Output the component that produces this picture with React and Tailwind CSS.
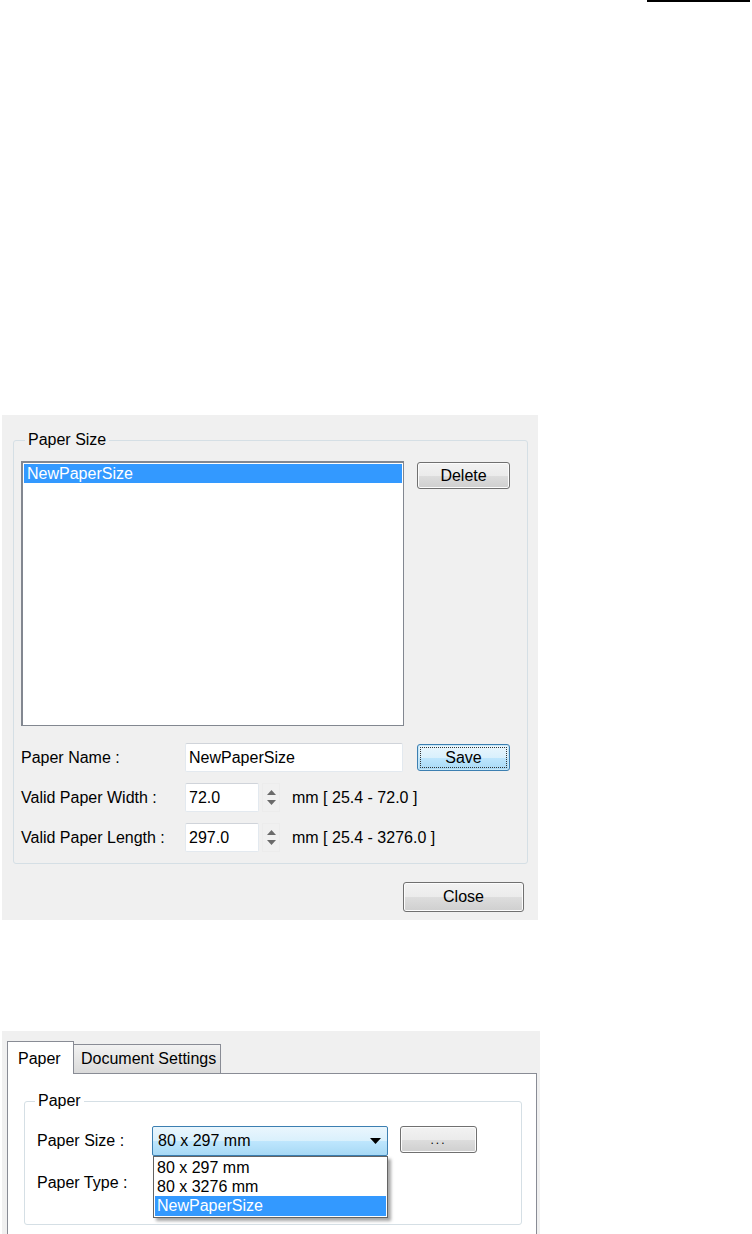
import React from "react";

const font = { fontFamily: '"Liberation Sans", Arial, sans-serif' };

function Btn({ children, className = "", focused = false }) {
  if (focused) {
    return (
      <div
        className={`flex items-center justify-center rounded-[3px] border border-[#3c7fb1] bg-[linear-gradient(to_bottom,#eaf6fd_0%,#d9f0fc_50%,#bee6fd_51%,#a7d9f5_100%)] p-[2px] shadow-[inset_0_0_0_1px_#c6e6f7] ${className}`}
      >
        <div className="flex h-full w-full items-center justify-center border border-dotted border-[#333]">
          {children}
        </div>
      </div>
    );
  }
  return (
    <div
      className={`flex items-center justify-center rounded-[3px] border border-[#707070] bg-[linear-gradient(to_bottom,#f2f2f2_0%,#ebebeb_50%,#dddddd_51%,#cfcfcf_100%)] shadow-[inset_0_0_0_1px_#fcfcfc] ${className}`}
    >
      {children}
    </div>
  );
}

function Spinner() {
  return (
    <div className="ml-[3px] flex h-[29px] w-[18px] flex-col items-center justify-center gap-[5px] border border-[#ececec] bg-[#f0f0f0]">
      <svg width="9" height="5" viewBox="0 0 9 5">
        <path d="M0 5 L4.5 0 L9 5 Z" fill="#6a6a6a" />
      </svg>
      <svg width="9" height="5" viewBox="0 0 9 5">
        <path d="M0 0 L4.5 5 L9 0 Z" fill="#6a6a6a" />
      </svg>
    </div>
  );
}

function Input({ value, className = "" }) {
  return (
    <div
      className={`flex h-[29px] items-center rounded-[2px] border border-[#e3e9ef] border-t-[#d0d4da] bg-white pl-[3px] ${className}`}
    >
      {value}
    </div>
  );
}

export default function App() {
  return (
    <div className="min-h-[1234px] bg-white text-[16px] text-black" style={font}>
      <div className="flex justify-end">
        <div className="mr-[2px] h-[2px] w-[103px] bg-black" />
      </div>

      {/* Paper size dialog */}
      <div className="ml-[2px] mt-[413px] h-[505px] w-[536px] bg-[#f0f0f0] pl-[11px] pt-[25px]">
        <div className="relative h-[424px] w-[515px] rounded-[3px] border border-[#d5dfe5] pl-[7px] pt-[20px]">
          <div className="absolute left-[11px] top-[-11px] bg-[#f0f0f0] px-[3px] leading-[20px]">
            Paper Size
          </div>
          <div className="flex items-start">
            <div className="h-[265px] w-[383px] border border-[#828790] border-l-[2px] border-t-[2px] bg-white p-[1px]">
              <div className="flex h-[19px] items-center bg-[#3399ff] pl-[3px] text-white">
                NewPaperSize
              </div>
            </div>
            <Btn className="ml-[13px] mt-[1px] h-[27px] w-[93px]">Delete</Btn>
          </div>

          <div className="mt-[17px] flex items-center">
            <div className="w-[164px]">Paper Name :</div>
            <Input value="NewPaperSize" className="w-[218px]" />
            <Btn focused className="ml-[14px] h-[27px] w-[93px]">
              Save
            </Btn>
          </div>
          <div className="mt-[11px] flex items-center">
            <div className="w-[164px]">Valid Paper Width :</div>
            <Input value="72.0" className="w-[74px]" />
            <Spinner />
            <div className="ml-[12px]">mm [ 25.4 - 72.0 ]</div>
          </div>
          <div className="mt-[11px] flex items-center">
            <div className="w-[164px]">Valid Paper Length :</div>
            <Input value="297.0" className="w-[74px]" />
            <Spinner />
            <div className="ml-[12px]">mm [ 25.4 - 3276.0 ]</div>
          </div>
        </div>
        <Btn className="ml-[390px] mt-[18px] h-[30px] w-[121px]">Close</Btn>
      </div>

      {/* Tabbed panel */}
      <div className="ml-[2px] mt-[111px] h-[203px] w-[538px] overflow-hidden bg-[#f0f0f0] pl-[5px] pt-[10px]">
        <div className="flex h-[32px] items-end">
          <div className="relative z-10 -mb-[1px] flex h-[33px] w-[67px] items-start border border-b-0 border-[#898c95] bg-white pl-[10px] pt-[5px]">
            Paper
          </div>
          <div className="flex h-[29px] w-[147px] items-center border border-b-0 border-l-0 border-[#898c95] bg-[linear-gradient(to_bottom,#f2f2f2,#dadada)] pl-[7px]">
            Document Settings
          </div>
        </div>
        <div className="h-[200px] w-[530px] border border-b-0 border-[#898c95] bg-white pl-[16px] pt-[27px]">
          <div className="relative h-[124px] w-[498px] rounded-[3px] border border-[#d5dfe5] pl-[12px] pt-[24px]">
            <div className="absolute left-[10px] top-[-11px] bg-white px-[3px] leading-[20px]">
              Paper
            </div>
            <div className="flex items-start">
              <div className="flex h-[30px] w-[115px] items-center">Paper Size :</div>
              <div className="relative">
                <div className="flex h-[30px] w-[236px] items-center justify-between rounded-[2px] border border-[#3c7fb1] bg-[linear-gradient(to_bottom,#eaf6fd_0%,#d9f0fc_50%,#bee6fd_51%,#a7d9f5_100%)] pl-[5px] pr-[6px]">
                  <span>80 x 297 mm</span>
                  <svg width="11" height="6" viewBox="0 0 11 6">
                    <path d="M0 0 L11 0 L5.5 6 Z" fill="#000" />
                  </svg>
                </div>
                <div className="absolute left-[1px] top-[30px] z-20 w-[235px] border border-[#646464] bg-white p-[1px] shadow-[3px_3px_3px_rgba(0,0,0,0.35)]">
                  <div className="flex h-[19px] items-center pl-[2px] leading-none">80 x 297 mm</div>
                  <div className="flex h-[19px] items-center pl-[2px] leading-none">80 x 3276 mm</div>
                  <div className="flex h-[20px] items-center bg-[#3399ff] pl-[2px] leading-none text-white">
                    NewPaperSize
                  </div>
                </div>
              </div>
              <Btn className="ml-[12px] h-[27px] w-[77px] text-[12px] tracking-[2px]">...</Btn>
            </div>
            <div className="mt-[17px] flex h-[20px] items-center">Paper Type :</div>
          </div>
        </div>
      </div>
    </div>
  );
}
